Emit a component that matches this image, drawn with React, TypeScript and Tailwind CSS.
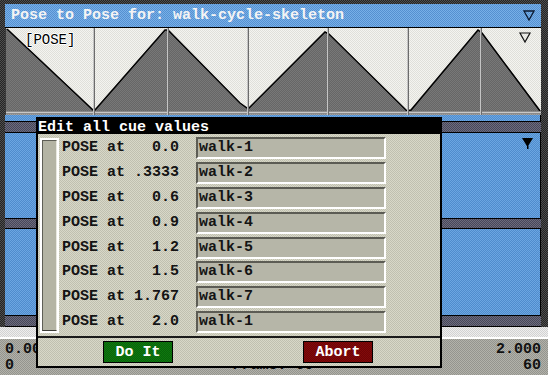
const cues = [
  ["0.0", "walk-1"],
  [".3333", "walk-2"],
  ["0.6", "walk-3"],
  ["0.9", "walk-4"],
  ["1.2", "walk-5"],
  ["1.5", "walk-6"],
  ["1.767", "walk-7"],
  ["2.0", "walk-1"],
];

function Waveform() {
  return (
    <svg width="536" height="87" viewBox="5 28 536 87" className="block">
      <defs>
        <pattern id="lt" width="2" height="2" patternUnits="userSpaceOnUse">
          <rect width="2" height="2" fill="#f4f4f0" />
          <rect width="1" height="1" fill="#e0e0da" />
          <rect x="1" y="1" width="1" height="1" fill="#e0e0da" />
        </pattern>
        <pattern id="dk" width="2" height="2" patternUnits="userSpaceOnUse">
          <rect width="2" height="2" fill="#666666" />
          <rect width="1" height="1" fill="#787878" />
          <rect x="1" y="1" width="1" height="1" fill="#787878" />
        </pattern>
        <pattern id="md" width="2" height="2" patternUnits="userSpaceOnUse">
          <rect width="2" height="2" fill="#8a8a8a" />
          <rect width="1" height="1" fill="#a4a4a4" />
        </pattern>
      </defs>
      <rect x="5" y="28" width="536" height="83" fill="url(#lt)" />
      <polygon
        points="5,28 7,29 93,110 95,110 165,30 168,30 240,103 247,108 249,108 325,32 329,34 407,111 411,110 478,30 482,33 541,111 541,112 5,112"
        fill="url(#dk)"
      />
      <polyline
        points="7,29 93,110 95,110 165,30 168,30 240,103 247,108 249,108 325,32 329,34 407,111 411,110 478,30 482,33 540,111"
        fill="none"
        stroke="#000"
        strokeWidth="1.5"
      />
      <rect x="5" y="111" width="536" height="4" fill="url(#md)" />
      <rect x="5" y="112" width="536" height="1" fill="#c8c8c8" />
      {[93, 167, 247, 327, 407, 480].map((x) => (
        <g key={x}>
          <rect x={x} y="28" width="1" height="87" fill="#c4c4c4" />
          <rect x={x + 1} y="28" width="1" height="87" fill="#6c6c6c" />
        </g>
      ))}
      <rect x="5" y="28" width="1" height="87" fill="#3a3a3a" />
      <polygon points="520,33 530,33 525,42" fill="none" stroke="#111" strokeWidth="1.2" />
    </svg>
  );
}

function Band() {
  return (
    <div className="h-[12px] border-y border-black bg-[image:repeating-conic-gradient(#46465a_0_25%,#6c6c7c_0_50%)] bg-[length:2px_2px]" />
  );
}

export default function App() {
  return (
    <div className="relative w-[548px] h-[375px] overflow-hidden font-['Liberation_Mono',monospace] font-bold text-[15px] leading-[15px] bg-[image:repeating-conic-gradient(#242424_0_25%,#4e4e4e_0_50%)] bg-[length:2px_2px]">
      <div className="flex flex-col h-full">
        <div className="flex flex-col pl-[5px] pr-[7px] pt-[4px]">
          <div className="h-[24px] flex items-center justify-between pl-[6px] pr-[6px] border-b border-black bg-[image:repeating-conic-gradient(#5590d0_0_25%,#78b0e8_0_50%)] bg-[length:2px_2px] text-[#f4f4f4]">
            <span className="whitespace-pre">Pose to Pose for: walk-cycle-skeleton</span>
            <svg width="12" height="11" viewBox="0 0 12 11">
              <polygon points="1,1 11,1 6,10" fill="none" stroke="#0c1a30" strokeWidth="1.3" />
            </svg>
          </div>
          <div className="relative h-[87px]">
            <Waveform />
            <span className="absolute left-[20px] top-[5px] text-[14px] leading-[14px] font-normal text-black whitespace-pre [text-shadow:1px_0_#fff,-1px_0_#fff,0_1px_#fff,0_-1px_#fff]">
              [POSE]
            </span>
          </div>
          <div className="h-[6px] border-r border-black bg-[image:repeating-conic-gradient(#4f8ccc_0_25%,#6ca6e2_0_50%)] bg-[length:2px_2px]" />
          <Band />
          <div className="relative h-[85px] border-r border-black bg-[image:repeating-conic-gradient(#4f8ccc_0_25%,#6ca6e2_0_50%)] bg-[length:2px_2px]">
            <svg width="12" height="12" viewBox="0 0 12 12" className="absolute right-[6px] top-[5px]">
              <polygon points="0,0 11,0 5.5,9" fill="#000" />
              <rect x="5" y="8" width="1.5" height="3" fill="#000" />
            </svg>
          </div>
          <div className="h-[11px] border-y border-black bg-[image:repeating-conic-gradient(#46465a_0_25%,#6c6c7c_0_50%)] bg-[length:2px_2px]" />
          <div className="h-[86px] border-r border-black bg-[image:repeating-conic-gradient(#4f8ccc_0_25%,#6ca6e2_0_50%)] bg-[length:2px_2px]" />
          <Band />
        </div>
        <div className="h-[10px] bg-[image:repeating-conic-gradient(#d2d2d2_0_25%,#eeeeee_0_50%)] bg-[length:2px_2px]" />
        <div className="h-[2px] bg-white" />
        <div className="flex-1 grid grid-cols-3 pl-[5px] pr-[7px] pt-[3px] leading-[16px] text-[#111] bg-[image:repeating-conic-gradient(#94948e_0_25%,#b2b2aa_0_50%)] bg-[length:2px_2px]">
          <div className="flex flex-col">
            <span>0.000</span>
            <span>0</span>
          </div>
          <div className="flex flex-col items-center">
            <span>&nbsp;</span>
            <span className="whitespace-pre">Frame: 60</span>
          </div>
          <div className="flex flex-col items-end">
            <span>2.000</span>
            <span>60</span>
          </div>
        </div>
      </div>

      <div className="absolute left-[36px] top-[117px] w-[406px] h-[251px] border-2 border-black flex flex-col bg-[image:repeating-conic-gradient(#c0c0b0_0_25%,#d8d8c8_0_50%)] bg-[length:2px_2px] text-[#141414]">
        <div className="h-[15px] shrink-0 bg-black text-white leading-[17px] whitespace-pre">Edit all cue values</div>
        <div className="h-[204px] shrink-0 flex border-b-2 border-[#1a1a1a]">
          <div className="ml-[2px] mt-[4px] w-[19px] h-[195px] border-2 border-white">
            <div className="h-full border border-[#5e5e56] border-r-[#e8e8e0] border-b-[#3e3e38] bg-[#b4b4a4]" />
          </div>
          <div className="ml-[3px] pt-[3px] flex flex-col">
            {cues.map(([t, v], i) => (
              <div key={i} className="h-[25px] flex items-start">
                <span className="w-[134px] h-[22px] leading-[22px] whitespace-pre">
                  {"POSE at " + t.padStart(5, " ")}
                </span>
                <div className="w-[190px] h-[22px] leading-[18px] pl-[1px] border-2 border-t-[#5c5c54] border-l-[#5c5c54] border-b-white border-r-white bg-[#b6b6a8]">
                  {v}
                </div>
              </div>
            ))}
          </div>
        </div>
        <div className="flex-1 flex items-center">
          <div className="ml-[65px] w-[70px] h-[22px] flex items-center justify-center border border-black bg-[image:repeating-conic-gradient(#08640a_0_25%,#10780f_0_50%)] bg-[length:2px_2px] text-white">
            Do It
          </div>
          <div className="ml-[130px] w-[70px] h-[22px] flex items-center justify-center border border-black bg-[image:repeating-conic-gradient(#6e0406_0_25%,#820a0a_0_50%)] bg-[length:2px_2px] text-white">
            Abort
          </div>
        </div>
      </div>
    </div>
  );
}
